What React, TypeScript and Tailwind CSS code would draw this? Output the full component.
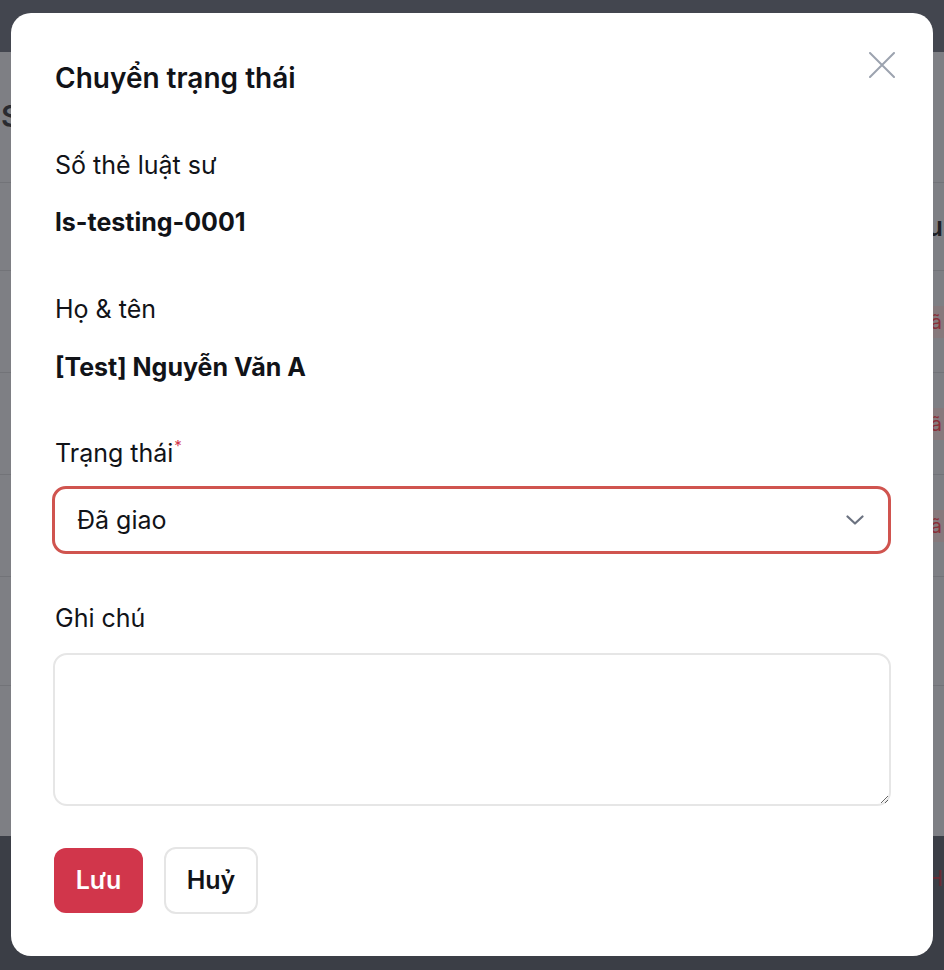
import React from "react";

const rows = [0, 1, 2];

const StatusModal = () => {
  return (
    <div className="absolute left-[11px] top-[13px] w-[922px] h-[943px] rounded-[20px] bg-white px-[42px] pt-[48px] flex flex-col text-[#111318]">
      <button type="button" className="absolute right-[38px] top-[39px] w-[26px] h-[26px] flex items-center justify-center text-[#9ca3af]">
        <svg width="26" height="26" viewBox="0 0 26 26" fill="none" stroke="currentColor" strokeWidth="2" strokeLinecap="round">
          <path d="M1 1L25 25M25 1L1 25" />
        </svg>
      </button>

      <h2 className="pl-[2px] text-[28px] leading-[34px] font-semibold">Chuyển trạng thái</h2>

      <div className="pl-[2px] mt-[55px] text-[25px] leading-[30px]">Số thẻ luật sư</div>
      <div className="pl-[2px] mt-[27px] text-[25px] leading-[30px] font-bold">ls-testing-0001</div>

      <div className="pl-[2px] mt-[57px] text-[25px] leading-[30px]">Họ &amp; tên</div>
      <div className="pl-[2px] mt-[28px] text-[25px] leading-[30px] font-bold">[Test] Nguyễn Văn A</div>

      <div className="pl-[2px] mt-[56px] text-[25px] leading-[30px]">
        Trạng thái<sup className="text-[#d1364b] text-[15px] ml-[1px] -top-[11px]">*</sup>
      </div>
      <div className="mt-[18px] h-[68px] -ml-[1px] rounded-[14px] border-[3px] border-[#d0544f] flex items-center justify-between pl-[22px] pr-[24px]">
        <span className="text-[25px] leading-[30px]">Đã giao</span>
        <svg width="18" height="10" viewBox="0 0 18 10" fill="none" stroke="#6b7280" strokeWidth="2.2" strokeLinecap="round" strokeLinejoin="round">
          <path d="M1.5 1.5L9 8.5L16.5 1.5" />
        </svg>
      </div>

      <div className="pl-[2px] mt-[49px] text-[25px] leading-[30px]">Ghi chú</div>
      <textarea className="mt-[20px] h-[153px] w-full rounded-[14px] border-2 border-[#e6e6e6] outline-none px-[20px] py-[14px] text-[25px]" />

      <div className="mt-[41px] flex items-center gap-[21px] pl-[1px]">
        <button type="button" className="w-[89px] h-[65px] rounded-[12px] bg-[#d1364b] text-white text-[25px] font-semibold">
          Lưu
        </button>
        <button type="button" className="w-[94px] h-[67px] rounded-[12px] border-2 border-[#e5e5e5] bg-white text-[25px] font-semibold text-[#111318]">
          Huỷ
        </button>
      </div>
    </div>
  );
};

export default function App() {
  return (
    <div className="relative w-[944px] h-[970px] overflow-hidden flex flex-col" style={{ fontFamily: "Inter, 'Noto Sans', sans-serif" }}>
      <div className="h-[52px] bg-[#43464f]" />
      <div className="h-[784px] bg-[#7e7f84] flex flex-col">
        <div className="h-[130px] pt-[46px] pl-[1px] text-[30px] leading-[36px] font-semibold text-[#2a2b30] flex justify-between">
          <span>S</span>
        </div>
        <div className="h-[88px] border-t border-[#727378] flex items-center justify-end pr-[1px] text-[26px] font-semibold text-[#1e1f24]">
          <span>u</span>
        </div>
        {rows.map((r) => (
          <div key={r} className="h-[102px] border-t border-[#727378] flex items-center justify-end">
            <span className="h-[32px] px-[2px] bg-[#86797c] text-[#8a2f38] text-[20px] leading-[32px]">ã</span>
          </div>
        ))}
        <div className="h-[109px] border-t border-[#727378]" />
        <div className="flex-1 border-t border-[#727378]" />
      </div>
      <div className="flex-1 bg-[#3b3e46] flex items-center justify-end pb-[50px] pr-[1px]">
        <span className="text-[22px] text-[#6b2a33]">H</span>
      </div>

      <StatusModal />
    </div>
  );
}
